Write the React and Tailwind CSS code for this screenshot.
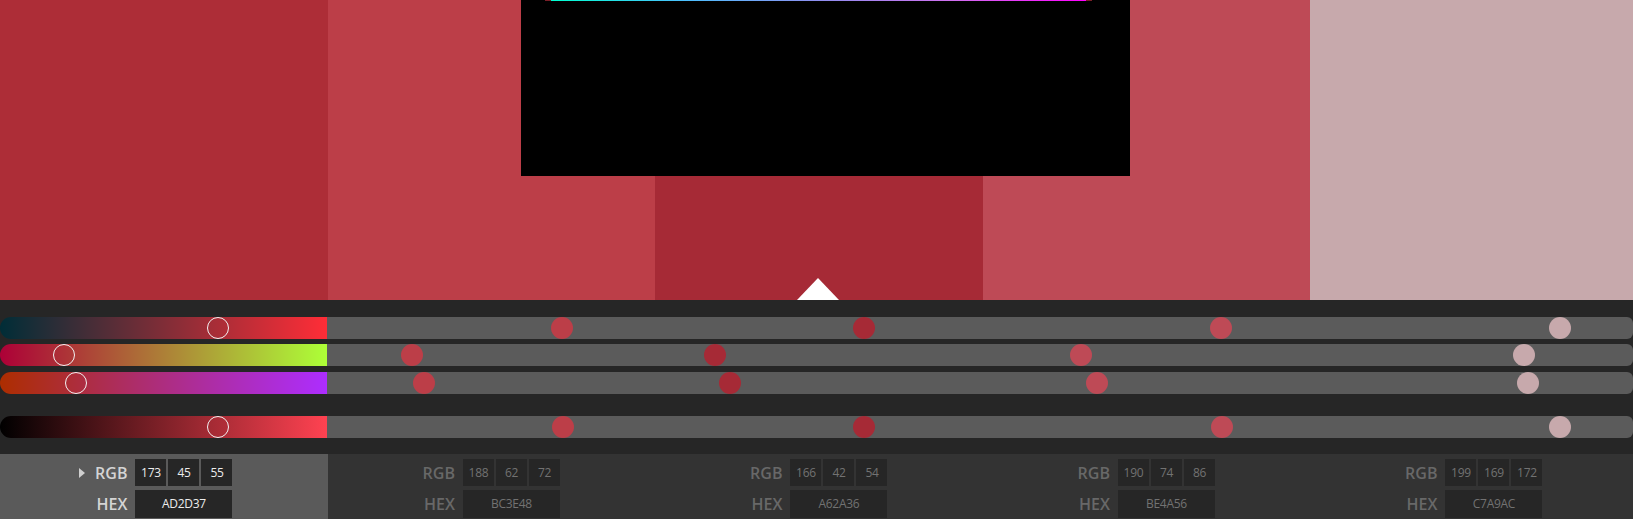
import React from 'react'

const SWATCHES = [
    { hex: 'AD2D37', rgb: [173, 45, 55], color: '#ad2d37' },
    { hex: 'BC3E48', rgb: [188, 62, 72], color: '#bc3e48' },
    { hex: 'A62A36', rgb: [166, 42, 54], color: '#a62a36' },
    { hex: 'BE4A56', rgb: [190, 74, 86], color: '#be4a56' },
    { hex: 'C7A9AC', rgb: [199, 169, 172], color: '#c7a9ac' }
]

// handle centres (px from left of the track), one per swatch
const SLIDERS = [
    { gradient: 'bg-[linear-gradient(to_right,#002d37,#ff2d37)]', pos: [218, 562, 864, 1221, 1560], gap: '' },
    { gradient: 'bg-[linear-gradient(to_right,#ad0037,#adff37)]', pos: [64, 412, 715, 1081, 1524], gap: 'mt-[5px]' },
    { gradient: 'bg-[linear-gradient(to_right,#ad2d00,#ad2dff)]', pos: [76, 424, 730, 1097, 1528], gap: 'mt-[6px]' },
    { gradient: 'bg-[linear-gradient(to_right,#000000,#ff4251)]', pos: [218, 563, 864, 1222, 1560], gap: 'mt-[22px]' }
]

function Slider({ slider }) {
    return (
        <div className={`relative flex h-[22px] ${slider.gap}`}>
            <div className={`w-[327px] rounded-l-full ${slider.gradient}`} />
            <div className="flex-1 rounded-r-[6px] bg-[#5b5b5b]" />
            {slider.pos.map((x, i) => (
                <div
                    key={i}
                    className={`absolute top-0 h-[22px] w-[22px] -translate-x-1/2 rounded-full ${
                        i === 0 ? 'border-[1.5px] border-[#f2f2f2]' : ''
                    }`}
                    style={{ left: x, backgroundColor: i === 0 ? 'transparent' : SWATCHES[i].color }}
                />
            ))}
        </div>
    )
}

function ValueBlock({ swatch, active }) {
    const label = active ? 'text-[#d4d4d4]' : 'text-[#686868]'
    const value = active ? 'text-[#ececec]' : 'text-[#727272]'
    return (
        <div className={`flex justify-center pt-[5px] ${active ? 'bg-[#5a5a5a]' : 'bg-[#333333]'}`}>
            <div className="relative grid grid-cols-[auto_auto] gap-x-[8px] gap-y-[2px]">
                {active && (
                    <div className="absolute left-[-16px] top-[9px] h-0 w-0 border-y-[5px] border-l-[6px] border-y-transparent border-l-[#cfcfcf]" />
                )}
                <div className={`flex h-[27px] items-center justify-end text-[16px] font-semibold leading-none ${label}`}>RGB</div>
                <div className="flex gap-[2px]">
                    {swatch.rgb.map((v, i) => (
                        <div key={i} className={`flex h-[27px] w-[31px] items-center justify-center bg-[#262626] text-[12px] tracking-[-0.3px] ${value}`}>
                            {v}
                        </div>
                    ))}
                </div>
                <div className={`flex h-[28px] items-center justify-end text-[16px] font-semibold leading-none ${label}`}>HEX</div>
                <div className={`flex h-[28px] w-[97px] items-center justify-center bg-[#262626] text-[12px] tracking-[-0.3px] ${value}`}>
                    {swatch.hex}
                </div>
            </div>
        </div>
    )
}

export default function App() {
    return (
        <div className="w-[1633px] h-[519px] overflow-hidden bg-[#262626] font-['Open_Sans',sans-serif]">
            <div className="relative flex h-[300px]">
                {SWATCHES.map((s, i) => (
                    <div key={i} className="w-[327.5px] shrink-0" style={{ backgroundColor: s.color }} />
                ))}
                <div className="absolute left-[521px] top-0 h-[176px] w-[609px] bg-black" />
                <div className="absolute left-[545px] top-0 flex h-[1px] w-[547px]">
                    <div className="w-[6px] bg-[#7a1f28]" />
                    <div className="flex-1 bg-[linear-gradient(to_right,#00ffd0,#4cc0ff,#8f8ff0,#d070f0,#ff00ff)]" />
                    <div className="w-[6px] bg-[#7a1f28]" />
                </div>
                <div className="absolute bottom-0 left-[797px] h-0 w-0 border-x-[21px] border-b-[22px] border-x-transparent border-b-white" />
            </div>

            <div className="pt-[17px] pb-[16px]">
                {SLIDERS.map((s, i) => (
                    <Slider key={i} slider={s} />
                ))}
            </div>

            <div className="grid h-[65px] grid-cols-[repeat(5,327.5px)]">
                {SWATCHES.map((s, i) => (
                    <ValueBlock key={i} swatch={s} active={i === 0} />
                ))}
            </div>
        </div>
    )
}
